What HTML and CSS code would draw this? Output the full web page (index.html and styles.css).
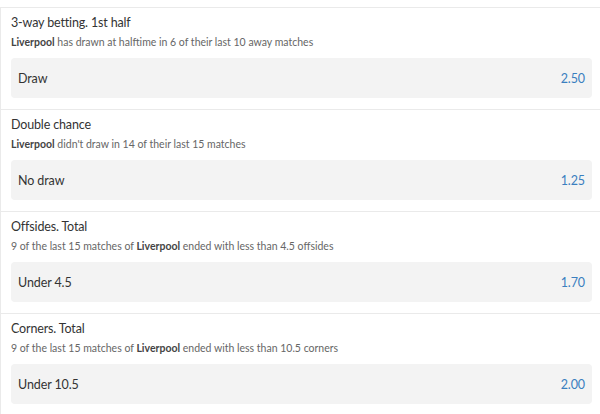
FILE: index.html
```html
<!DOCTYPE html>
<html lang="en">
<head>
    <meta charset="UTF-8">
    <meta name="viewport" content="width=device-width, initial-scale=1.0">
    <title>Betting tips</title>
    <link rel="stylesheet" href="styles.css">
</head>
<body>
    <div class="list">
        <div class="tip">
            <h3 class="tip-title">3-way betting. 1st half</h3>
            <p class="tip-note"><b>Liverpool</b> has drawn at halftime in 6 of their last 10 away matches</p>
            <div class="outcome">
                <span>Draw</span>
                <span class="odds">2.50</span>
            </div>
        </div>

        <div class="tip">
            <h3 class="tip-title">Double chance</h3>
            <p class="tip-note"><b>Liverpool</b> didn't draw in 14 of their last 15 matches</p>
            <div class="outcome">
                <span>No draw</span>
                <span class="odds">1.25</span>
            </div>
        </div>

        <div class="tip">
            <h3 class="tip-title">Offsides. Total</h3>
            <p class="tip-note">9 of the last 15 matches of <b>Liverpool</b> ended with less than 4.5 offsides</p>
            <div class="outcome">
                <span>Under 4.5</span>
                <span class="odds">1.70</span>
            </div>
        </div>

        <div class="tip">
            <h3 class="tip-title">Corners. Total</h3>
            <p class="tip-note">9 of the last 15 matches of <b>Liverpool</b> ended with less than 10.5 corners</p>
            <div class="outcome">
                <span>Under 10.5</span>
                <span class="odds">2.00</span>
            </div>
        </div>
    </div>
</body>
</html>
```

FILE: styles.css
```css
body {
    margin: 0;
    padding-top: 7px;
    font-family: Lato, "Noto Sans", sans-serif;
    color: #333;
    background: #fff;
    overflow: hidden;
}
.list {
    margin-right: -1px;
}
.tip {
    border-top: 1px solid #eaeaea;
    border-left: 1px solid #eaeaea;
    padding: 5px 9px 11px 10px;
}
.tip-title {
    margin: 0;
    font-size: 12.5px;
    font-weight: normal;
    letter-spacing: -0.15px;
    line-height: 20px;
    color: #333;
}
.tip-note {
    margin: 1px 0 8px;
    font-size: 10.5px;
    line-height: 16px;
    color: #666;
}
.tip-note b {
    color: #444;
}
.outcome {
    display: flex;
    justify-content: space-between;
    align-items: center;
    height: 40px;
    padding: 0 7px;
    background: #f3f3f3;
    border-radius: 4px;
    font-size: 12.5px;
    letter-spacing: -0.1px;
    color: #333;
}
.odds {
    color: #3a7fbf;
}
```
